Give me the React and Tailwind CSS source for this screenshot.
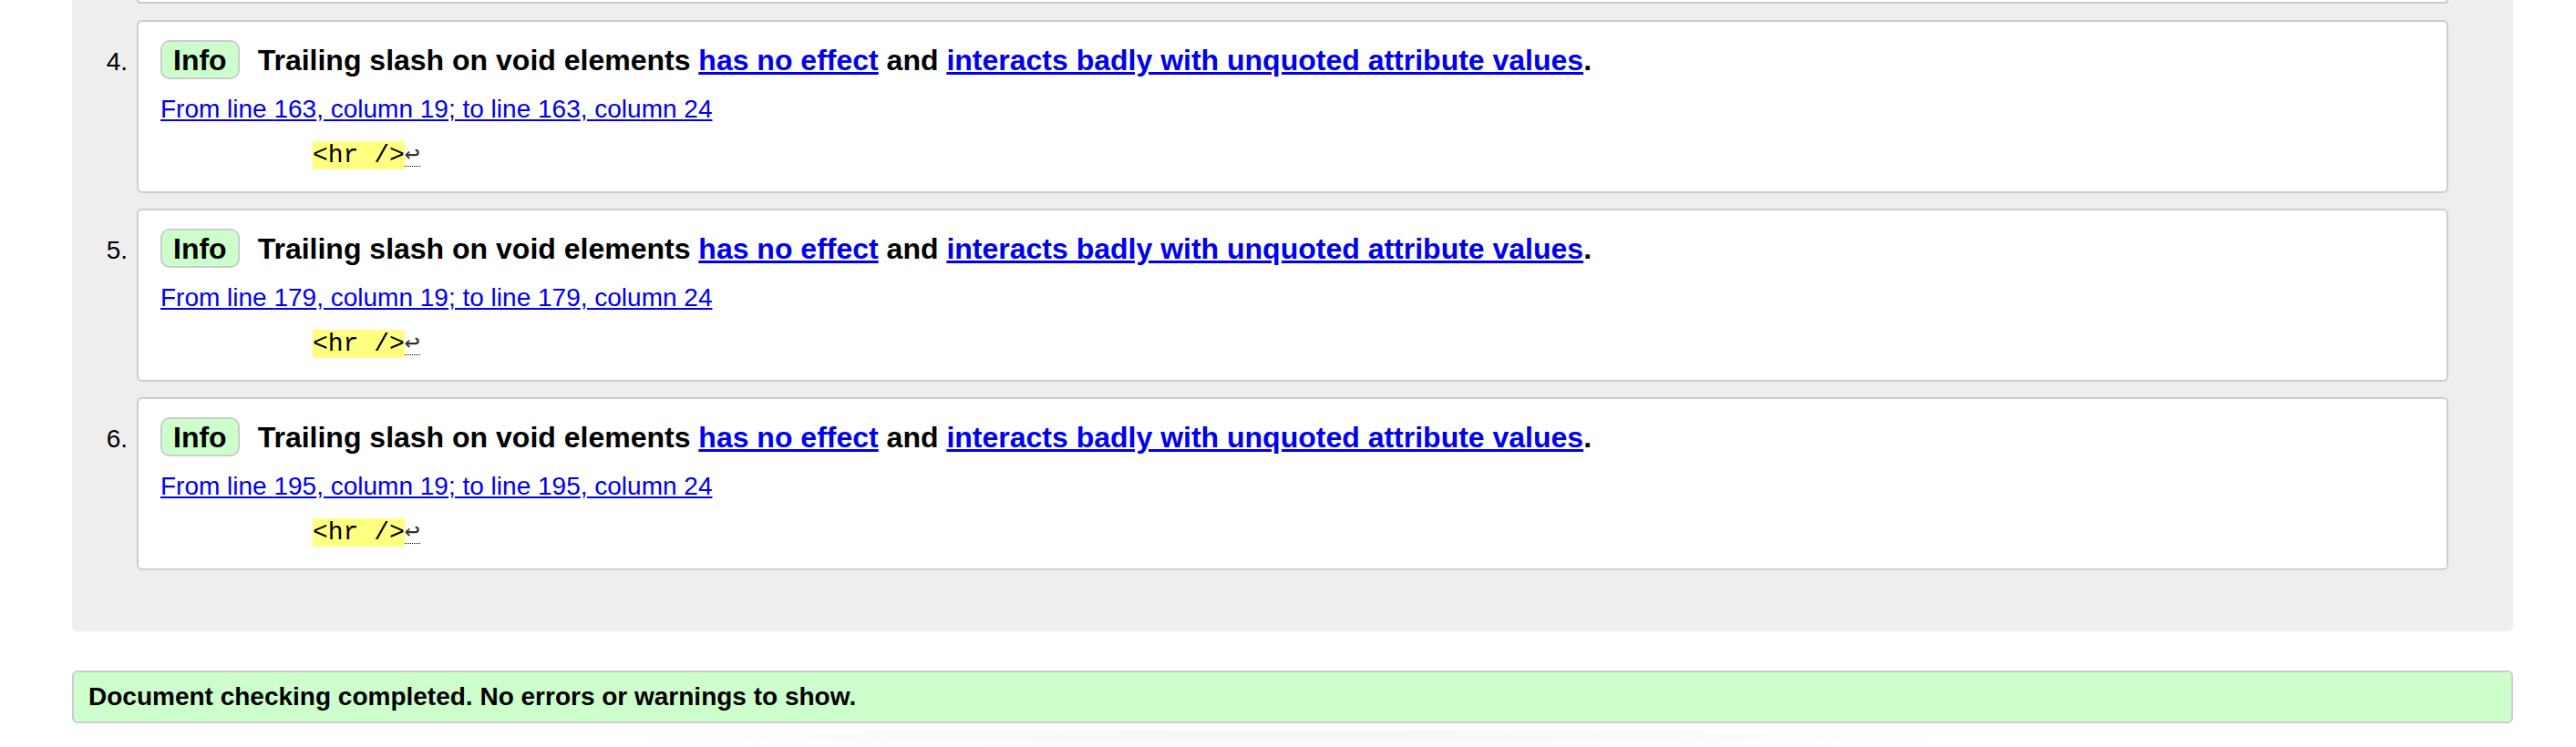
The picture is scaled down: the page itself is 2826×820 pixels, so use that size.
import React from 'react';

const MESSAGES = [
  { n: 4, line: 163 },
  { n: 5, line: 179 },
  { n: 6, line: 195 },
];

function Message({ n, line }) {
  return (
    <li className="flex items-baseline">
      <span className="w-[71px] shrink-0 pr-[10px] text-right text-[28px] text-black">{n}.</span>
      <div className="flex-1 h-[190px] bg-white border-2 border-[#cccccc] rounded-[6px] pt-[20px] px-[24px]">
        <div className="flex items-center h-[43px]">
          <span className="h-[43px] flex items-center px-[12px] bg-[#ccffcc] border-2 border-[#cccccc] rounded-[10px] text-[32px] font-bold leading-none">
            Info
          </span>
          <p className="ml-[20px] text-[32px] font-bold leading-none text-black">
            Trailing slash on void elements{' '}
            <a href="#" className="text-[#0000ee] underline">has no effect</a>
            {' '}and{' '}
            <a href="#" className="text-[#0000ee] underline">interacts badly with unquoted attribute values</a>.
          </p>
        </div>
        <p className="mt-[15px] text-[28px] leading-[35px]">
          <a href="#" className="text-[#0000ee] underline">
            From line {line}, column 19; to line {line}, column 24
          </a>
        </p>
        <p className="mt-[18px] ml-[167px] leading-[32px] text-[28px] font-['Liberation_Mono','Courier_New',monospace]">
          <code className="bg-[#ffff80] text-black font-['Liberation_Mono','Courier_New',monospace]">&lt;hr /&gt;</code>
          <span className="inline-block leading-[26px] text-[28px] text-[#333] border-b border-dotted border-black font-['DejaVu_Sans_Mono',monospace]">↩</span>
        </p>
      </div>
    </li>
  );
}

export default function App() {
  return (
    <div className="min-h-screen bg-white font-['Liberation_Sans',Arial,sans-serif] text-black overflow-hidden">
      {/* Messages panel */}
      <div className="ml-[79px] mr-[69px] bg-[#eeeeee] rounded-b-[6px] pb-[67px]">
        <div className="flex">
          <div className="ml-[71px] mr-[71px] flex-1 h-[4px] bg-white border-x-2 border-b-2 border-[#cccccc] rounded-b-[6px]" />
        </div>
        <ol className="mt-[18px] pr-[71px] flex flex-col gap-[17px]">
          {MESSAGES.map((m) => (
            <Message key={m.n} {...m} />
          ))}
        </ol>
      </div>

      {/* Summary */}
      <div className="ml-[79px] mr-[69px] mt-[43px] h-[58px] flex items-center px-[16px] bg-[#ccffcc] border-2 border-[#cccccc] rounded-[6px]">
        <p className="text-[28px] font-bold leading-none">Document checking completed. No errors or warnings to show.</p>
      </div>

      <div className="mx-auto mt-[8px] w-[1620px] h-[30px] bg-[radial-gradient(ellipse_at_top,#f6f6f6,transparent_70%)]" />
    </div>
  );
}
